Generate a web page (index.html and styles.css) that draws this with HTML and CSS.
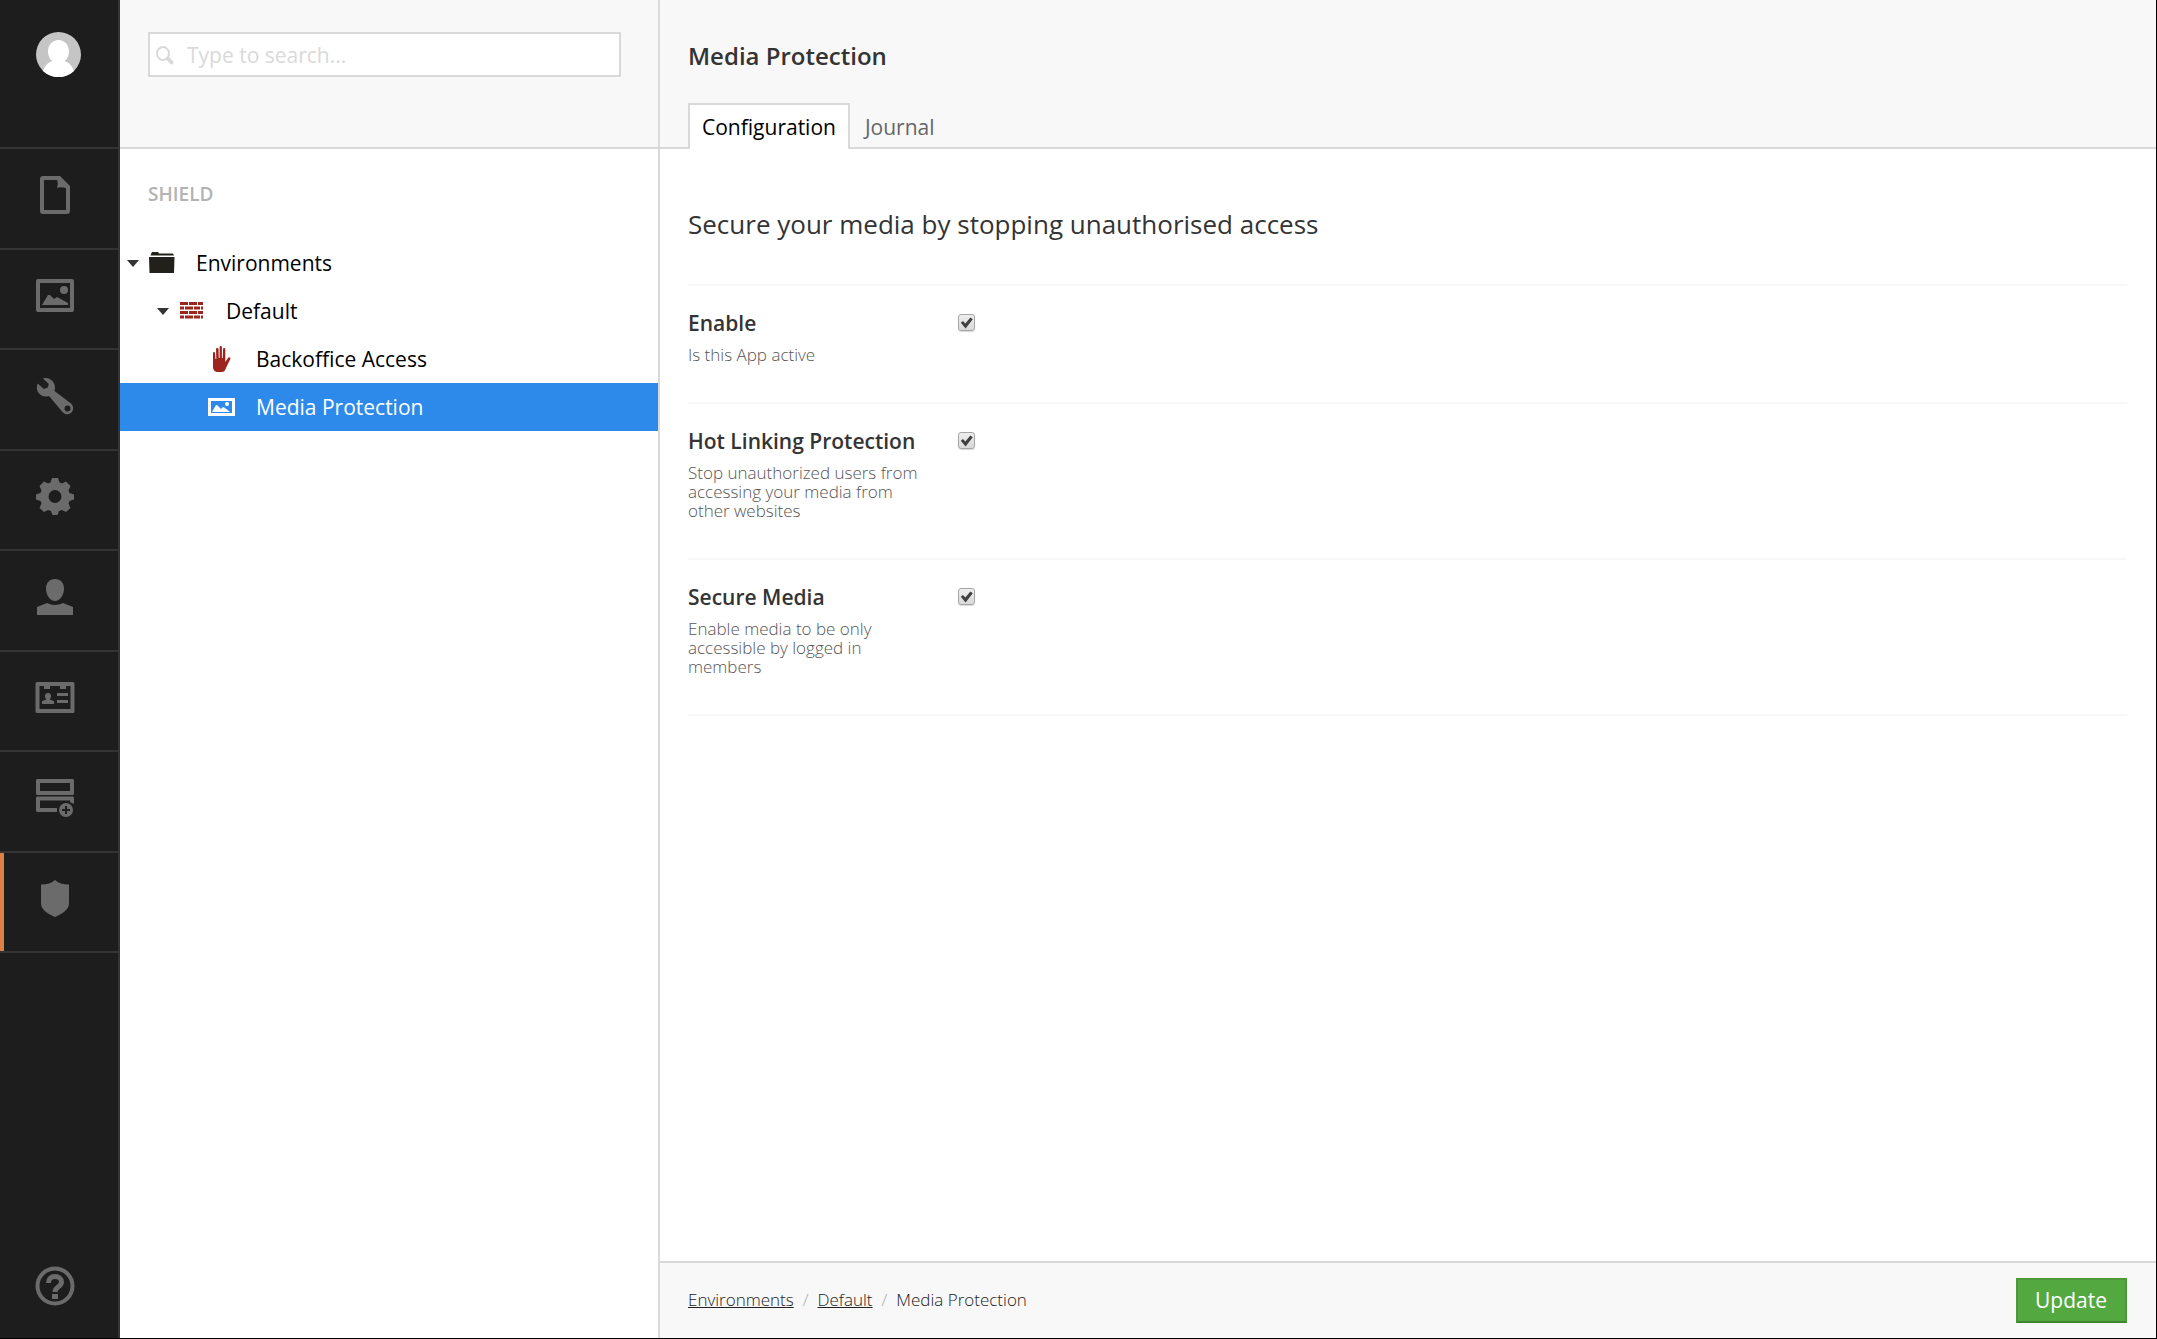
FILE: index.html
```html
<!DOCTYPE html>
<html lang="en">
<head>
<meta charset="utf-8">
<title>Media Protection</title>
<link rel="stylesheet" href="styles.css">
</head>
<body>
<div class="app">
  <nav class="rail" aria-label="Sections">
    <a class="avatar" href="#" aria-label="Your profile">
      <svg viewBox="0 0 45 45"><circle cx="22.5" cy="22.5" r="22.5" fill="#c5c5c5"/><path fill="#fff" d="M22.500 8c6 0 10.500 5 10.500 11.500 0 4-2 8-4.500 9.500 5 1.500 7.500 5 9.500 10A22.500 22.500 0 0 1 7 39c2-5 4.500-8.500 9.500-10-2.500-1.500-4.500-5.500-4.500-9.500C12 13 16.500 8 22.500 8z"/></svg>
    </a>
    <ul class="sections">
      <li><a href="#" aria-label="Content"><svg viewBox="0 0 40 40"><path fill-rule="evenodd" d="M8 1h17l10 10v25a3 3 0 0 1-3 3H8a3 3 0 0 1-3-3V4a3 3 0 0 1 3-3zm1 4v30h22V13c-4-1-7-1-9 0 1-3 1-6 0-8z"/></svg></a></li>
      <li><a href="#" aria-label="Media"><svg viewBox="0 0 40 40"><path fill-rule="evenodd" d="M3 3h34a2 2 0 0 1 2 2v29a2 2 0 0 1-2 2H3a2 2 0 0 1-2-2V5a2 2 0 0 1 2-2zm2 4v25h30V7z"/><circle cx="29" cy="14" r="4"/><path d="M7 29l6-10h2l4 4 3-2 11 6v2z"/></svg></a></li>
      <li><a href="#" aria-label="Settings"><svg viewBox="0 0 40 40"><path fill-rule="evenodd" d="M8 2.500c6-2 12 3 12 9 0 1.500-.3 2.500-.5 3.500L36 27.500c5 5 .5 12-5.500 10.500-1-.3-2-1-3-2L14 20C8 22 2 18 1.800 12c0-1.500.3-3 1-4.500l6 5.500 4-1.500 1-3.500zM32.500 29.500a3 3 0 1 0 0 6 3 3 0 0 0 0-6z"/></svg></a></li>
      <li><a href="#" aria-label="Developer"><svg viewBox="0 0 40 40"><path fill-rule="evenodd" d="M17 1h6l1.500 4.500 2.500 1L31 4.500l4.500 4.500-2 4.500 1 2.500 4.500 1.500v5L34.500 24l-1 2.500 2 4.500-4.500 4-4-2-3 1-1.500 4h-5L16 34l-3-1-4 2-4.500-4 2-4.500-1-2.500L1 22.500v-5L5.500 16l1-2.500-2-4.500L9 4.500l4 2 2.500-1zM20 13a6.500 6.500 0 1 0 0 13 6.500 6.500 0 0 0 0-13z"/></svg></a></li>
      <li><a href="#" aria-label="Users"><svg viewBox="0 0 40 40"><path d="M20 2c5.500 0 9 4 9 9.500C29 18 25 24 20 24s-9-6-9-12.500C11 6 14.500 2 20 2zM2 30l10-4c5 2.500 11 2.500 16 0l10 4v8H2z"/></svg></a></li>
      <li><a href="#" aria-label="Members"><svg viewBox="0 0 40 40"><path fill-rule="evenodd" d="M2 4h36a1.500 1.500 0 0 1 1.500 1.500v28A1.500 1.500 0 0 1 38 35H2a1.500 1.500 0 0 1-1.500-1.500v-28A1.500 1.500 0 0 1 2 4zm2.500 4v23h31V8H31v3h-6V8H15v3H9V8z"/><path d="M13 15c2 0 3 1.200 3 3s-1 3.500-1.500 3.500L19 23v3H7v-3l4.500-1.500C11 21.500 10 20 10 18s1-3 3-3zM22 15h11v3H22zM22 22h11v3H22z"/></svg></a></li>
      <li><a href="#" aria-label="Forms"><svg viewBox="0 0 40 40"><path fill-rule="evenodd" d="M2 1h36l1 1v14l-1 1H2l-1-1V2zm3 4v8h30V5zM2 18.500h36l1 1V26l-4-2v-1.500H5V30h17v4H2l-1-1V19.500z"/><path fill-rule="evenodd" d="M31 25a7 7 0 1 0 0 14 7 7 0 0 0 0-14zm-1 3h2v3h3v2h-3v3h-2v-3h-3v-2h3z"/></svg></a></li>
      <li class="current"><a href="#" aria-label="Shield" aria-current="page"><svg viewBox="0 0 40 40"><path d="M20 1c3 3 8 4.500 14 4.500V24c0 6-5 10-14 14-9-4-14-8-14-14V5.500C12 5.500 17 4 20 1z"/></svg></a></li>
    </ul>
    <a class="help" href="#" aria-label="Help"><svg viewBox="0 0 40 40"><circle cx="20" cy="20" r="17.500" fill="none" stroke="#6b6b6b" stroke-width="4"/><path fill="none" stroke="#6b6b6b" stroke-width="5" d="M13.500 17c0-4 2.500-6.500 6.500-6.500s6.500 2.500 6.500 5.500c0 5-6.500 4.500-6.500 10"/><path d="M17 28h6v5h-6z"/></svg></a>
  </nav>

  <aside class="panel">
    <form class="panel-head" role="search">
      <label class="search">
        <svg viewBox="0 0 20 20"><ellipse cx="8" cy="8.500" rx="6" ry="6.500" fill="none" stroke="#d9d9d9" stroke-width="2"/><path d="M13 13.500l3.500 4" stroke="#d9d9d9" stroke-width="4" stroke-linecap="round"/></svg>
        <input type="search" placeholder="Type to search..." aria-label="Search">
      </label>
    </form>
    <h2 class="tree-title">SHIELD</h2>
    <ul class="tree">
      <li><a class="node level-1" href="#"><span class="caret"></span><svg viewBox="0 0 28 28"><path fill="#22201b" d="M4 5l1-2h6l1 1.500h14l1 2H3.500zM2 8h25.500L27 24H2.500z"/></svg>Environments</a></li>
      <li><a class="node level-2" href="#"><span class="caret"></span><svg viewBox="0 0 28 28"><path fill="#9c261d" d="M3 5h8v3H3zM12 5h8v3h-8zM21 5h5v3h-5zM3 9.500h4v3H3zM8 9.500h8v3H8zM17 9.500h6v3h-6zM24 9.500h2v3h-2zM3 14h8v3H3zM12 14h8v3h-8zM21 14h5v3h-5zM3 18.500h4v3H3zM8 18.500h8v3H8zM17 18.500h6v3h-6zM24 18.500h2v3h-2z"/></svg>Default</a></li>
      <li><a class="node level-3" href="#"><span class="caret-gap"></span><svg viewBox="0 0 28 28"><path fill="#9c261d" d="M6 8c0-1.500 2-1.500 2 0l.5 6h.8L9 4c0-1.500 2.500-1.500 2.500 0l.3 9h.8V2c0-1.500 2.300-1.500 2.300 0v11h.8l.4-9c0-1.500 2.200-1.500 2.200 0v13l2.700-4c1-1.500 3-.8 2.300 1l-4.300 9c-1 2.500-2 4-4 4h-4c-3 0-5-2-5-5z"/></svg>Backoffice Access</a></li>
      <li><a class="node level-3 selected" href="#" aria-current="page"><span class="caret-gap"></span><svg viewBox="0 0 28 28"><path fill="#fff" fill-rule="evenodd" d="M1 5h27v18H1zm3 3v12h21V8z"/><circle cx="20" cy="11" r="2" fill="#fff"/><path fill="#fff" d="M5 19l4-7h1l4 4 2-2 2 1 5 4z"/></svg>Media Protection</a></li>
    </ul>
  </aside>

  <main class="editor">
    <header class="editor-head">
      <h1>Media Protection</h1>
      <div class="tabs" role="tablist">
        <button type="button" role="tab" aria-selected="true" class="tab active">Configuration</button>
        <button type="button" role="tab" aria-selected="false" class="tab">Journal</button>
      </div>
    </header>
    <section class="editor-body">
      <h2 class="intro">Secure your media by stopping unauthorised access</h2>
      <div class="property">
        <div class="about"><label for="enable">Enable</label><p id="enable-help">Is this App active</p></div>
        <input type="checkbox" id="enable" aria-describedby="enable-help" checked>
      </div>
      <div class="property">
        <div class="about"><label for="hotlink">Hot Linking Protection</label><p id="hotlink-help">Stop unauthorized users from accessing your media from other websites</p></div>
        <input type="checkbox" id="hotlink" aria-describedby="hotlink-help" checked>
      </div>
      <div class="property">
        <div class="about"><label for="secure">Secure Media</label><p id="secure-help">Enable media to be only accessible by logged in members</p></div>
        <input type="checkbox" id="secure" aria-describedby="secure-help" checked>
      </div>
    </section>
    <footer class="editor-foot">
      <ol class="crumbs">
        <li><a href="#">Environments</a></li>
        <li><a href="#">Default</a></li>
        <li>Media Protection</li>
      </ol>
      <button type="button" class="update">Update</button>
    </footer>
  </main>
</div>
</body>
</html>
```
FILE: styles.css
```css
* { box-sizing: border-box; }

body {
  margin: 0;
  font-family: "Open Sans", "Noto Sans", sans-serif;
  font-size: 21px;
  line-height: 30px;
  color: #343434;
  background: #fff;
}

h1, h2, p, ul, ol { margin: 0; padding: 0; }
ul, ol { list-style: none; }
a { color: inherit; text-decoration: none; }
svg { display: block; flex: none; }
button, input { font: inherit; }

.app {
  display: grid;
  grid-template-columns: 120px 540px 1fr;
  min-height: 100vh;
  border-right: 1px solid #000;
  border-bottom: 1px solid #000;
}

/* Icon rail */
.rail {
  display: flex;
  flex-direction: column;
  background: #1d1d1d;
  border-right: 2px solid #343434;
}
.avatar { height: 147px; padding: 32px 0 0 36px; }
.avatar svg { width: 45px; height: 45px; }
.sections {
  display: grid;
  grid-auto-rows: 1fr;
  height: 806px;
  border-bottom: 2px solid #343434;
}
.sections li { border-top: 2px solid #343434; }
.sections a { display: block; height: 100%; padding: 26px 0 0 35px; }
.sections .current a { padding-left: 31px; border-left: 4px solid #df7f48; }
.sections svg, .help svg { width: 40px; height: 40px; fill: #6b6b6b; }
.help { margin-top: auto; padding: 0 0 32px 35px; }

/* Tree panel */
.panel { border-right: 2px solid #d9d9d9; }
.panel-head {
  height: 149px;
  padding: 32px 37px 0 28px;
  background: #f8f8f8;
  border-bottom: 2px solid #d9d9d9;
}
.search {
  display: flex;
  align-items: center;
  height: 45px;
  padding-left: 5px;
  background: #fff;
  border: 2px solid #d9d9d9;
}
.search svg { width: 20px; height: 20px; }
.search input {
  flex: 1;
  min-width: 0;
  padding: 0 12px;
  border: 0;
  outline: 0;
  background: none;
}
.search input::placeholder { color: #d9d9d9; opacity: 1; }
.tree-title {
  padding: 30px 28px 30px;
  font-size: 19px;
  font-weight: 600;
  color: #b3b3b3;
}
.node {
  display: flex;
  align-items: center;
  height: 48px;
  color: #000;
}
.node svg { width: 28px; height: 28px; margin: 0 21px 0 8px; }
.caret, .caret-gap { width: 12px; }
.caret { border: 6px solid transparent; border-top: 7px solid #343434; border-bottom: 0; }
.level-1 { padding-left: 7px; }
.level-2 { padding-left: 37px; }
.level-3 { padding-left: 67px; }
.selected { background: #2e8aea; color: #fff; }

/* Editor */
.editor { display: flex; flex-direction: column; min-width: 0; }
.editor-head {
  height: 149px;
  padding: 41px 29px 0 28px;
  background: #f8f8f8;
  border-bottom: 2px solid #d9d9d9;
}
h1 { font-size: 24px; font-weight: 600; line-height: 30px; }
.tabs { display: flex; gap: 1px; margin-top: 32px; }
/* The tabs reach over the header's bottom border, so the active one opens onto the body. */
.tab {
  height: 46px;
  padding: 0 12px;
  color: #666;
  background: none;
  border: 2px solid transparent;
  border-bottom: 0;
}
.tab.active { color: #000; background: #fff; border-color: #d9d9d9; }
.editor-body { flex: 1; padding: 57px 29px 0 28px; }
.intro {
  padding-bottom: 42px;
  font-size: 26px;
  font-weight: 400;
  line-height: 36px;
  border-bottom: 2px solid #f8f8f8;
}
.property {
  display: flex;
  align-items: flex-start;
  gap: 30px;
  padding: 22px 0 38px;
  border-bottom: 2px solid #f8f8f8;
}
.about { width: 240px; }
.about label { display: block; font-weight: 600; }
.about p { margin-top: 7px; font-size: 17px; font-weight: 300; line-height: 19px; color: #555; }
.property input {
  appearance: none;
  width: 17px;
  height: 17px;
  margin: 6px 0 0;
  border: 1px solid #a5a5a5;
  border-radius: 3px;
  background: linear-gradient(#eee, #d9d9d9);
  box-shadow: 0 1px 1px #d9d9d9;
}
.property input:checked::before {
  content: "";
  display: block;
  width: 15px;
  height: 15px;
  background: #404040;
  clip-path: polygon(12% 52%, 26% 40%, 42% 56%, 76% 16%, 92% 28%, 44% 90%);
}
.editor-foot {
  display: flex;
  align-items: center;
  justify-content: space-between;
  height: 77px;
  padding: 0 29px 0 28px;
  background: #f8f8f8;
  border-top: 2px solid #d9d9d9;
}
.crumbs { display: flex; padding-bottom: 2px; font-size: 17px; font-weight: 300; line-height: 24px; color: #222; }
.crumbs a { text-decoration: underline; }
.crumbs li + li::before { content: "/"; margin: 0 9px; color: #aaa; }
.update {
  height: 45px;
  padding: 0 18px 2px 17px;
  color: #fff;
  background: #53a93f;
  border: 2px solid #4b9839;
  border-bottom-color: #41842f;
}
```
